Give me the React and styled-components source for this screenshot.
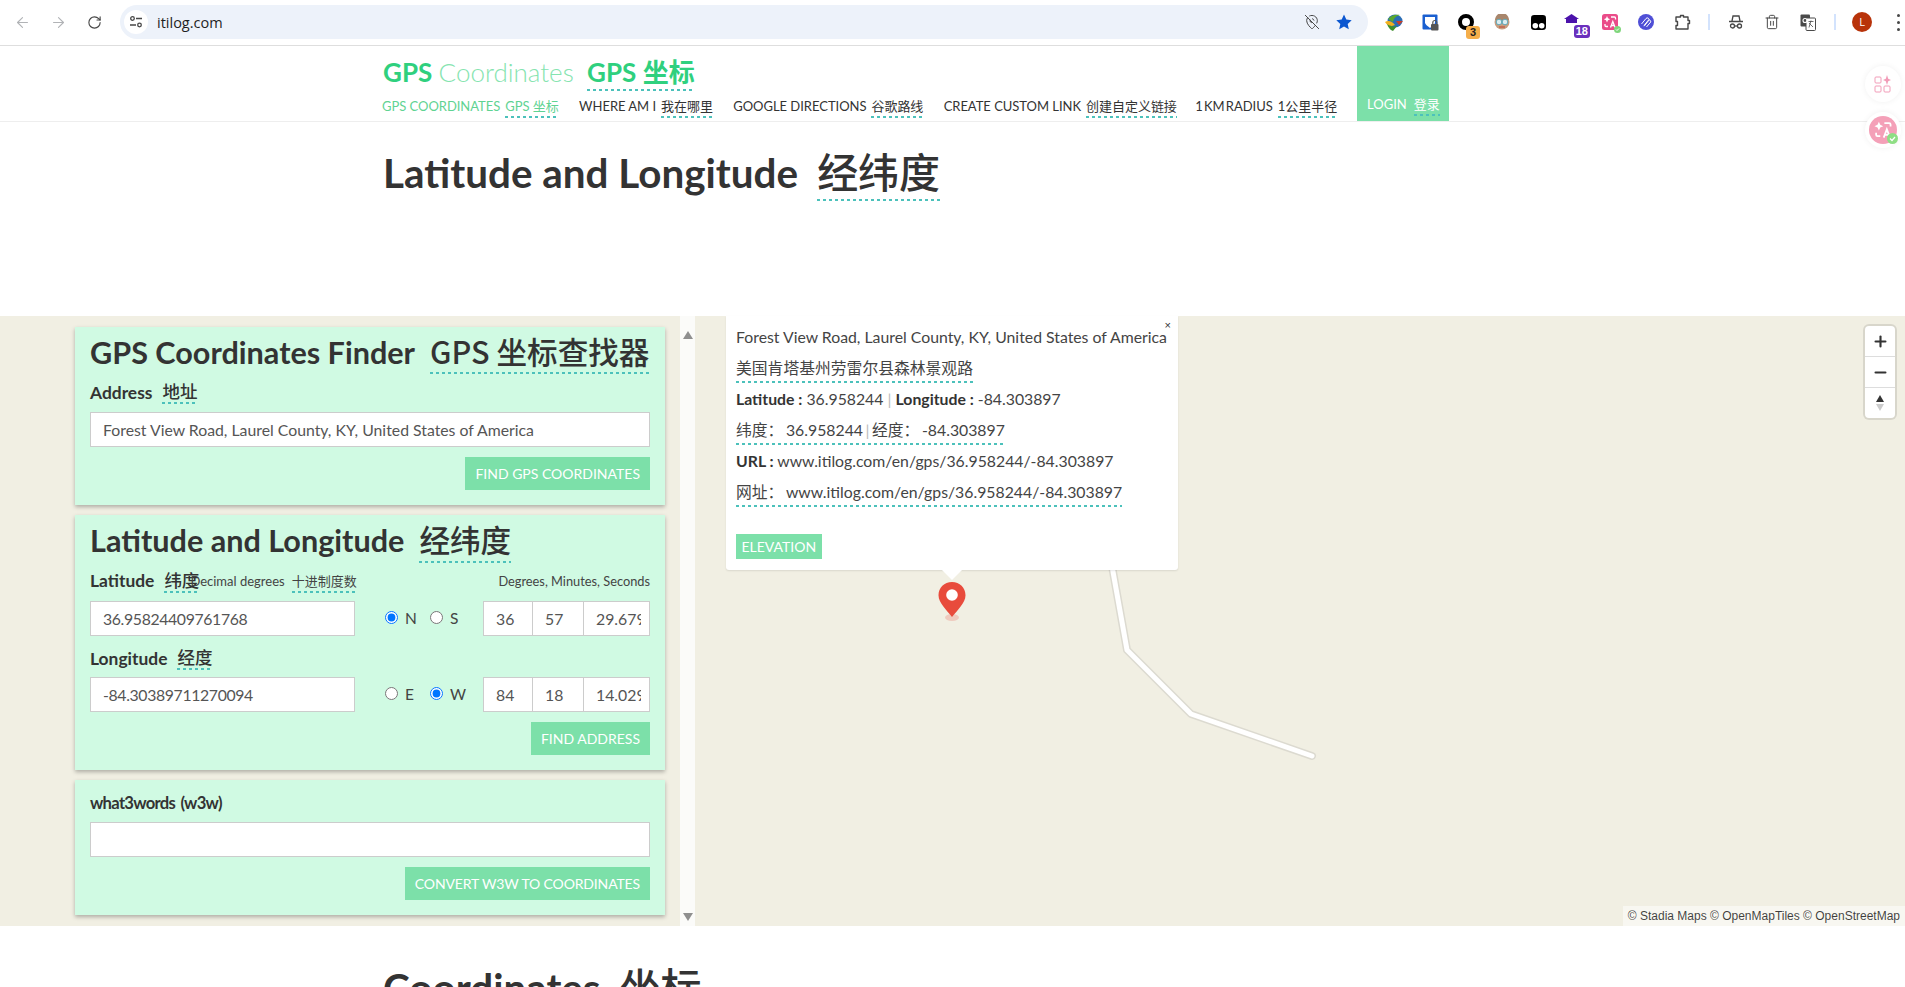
import React from 'react';
import styled, { createGlobalStyle } from 'styled-components';
import { ArrowLeft, ArrowRight, RotateCw, MapPinOff, Plus, Minus, Trash2 } from 'lucide-react';

const FONT = `Lato, "Noto Sans CJK SC", sans-serif`;
const GREEN = '#7ce0a9';

const GlobalStyle = createGlobalStyle`
  html, body {
    margin: 0;
    padding: 0;
    background: #fff;
    overflow: hidden;
  }
  * { box-sizing: border-box; }
`;

const Page = styled.div`
  position: relative;
  width: 1905px;
  height: 987px;
  overflow: hidden;
  font-family: ${FONT};
  color: #333;
`;

/* browser chrome */
const Toolbar = styled.div`
  display: flex;
  align-items: center;
  height: 46px;
  padding: 0 0 1px 4px;
  border-bottom: 1px solid #dedede;
  background: #fff;
`;
const Slot = styled.div`
  position: relative;
  flex: none;
  width: 36px;
  height: 36px;
  display: flex;
  align-items: center;
  justify-content: center;
  color: ${(p) => p.$color || '#474747'};
`;
const UrlPill = styled.div`
  flex: 1;
  height: 34px;
  margin: 0 8px;
  padding: 0 16px 0 4px;
  display: flex;
  align-items: center;
  border-radius: 17px;
  background: #edf2fa;
`;
const TuneBadge = styled.div`
  width: 24px;
  height: 24px;
  border-radius: 50%;
  background: #fff;
  display: flex;
  align-items: center;
  justify-content: center;
`;
const UrlText = styled.span`
  margin-left: 9px;
  flex: 1;
  font: 14.5px "Open Sans", sans-serif;
  color: #1f1f1f;
`;
const PillIcons = styled.div`
  display: flex;
  align-items: center;
  gap: 16px;
`;
const Divider = styled.div`
  flex: none;
  width: 18px;
  display: flex;
  justify-content: center;
  &::before {
    content: '';
    width: 2px;
    height: 16px;
    background: #d3e3fd;
  }
`;
const Count = styled.span`
  position: absolute;
  right: ${(p) => p.$right}px;
  bottom: ${(p) => p.$bottom}px;
  min-width: 14px;
  height: 13px;
  padding: 0 2px;
  border-radius: 3px;
  background: ${(p) => p.$bg};
  color: ${(p) => p.$fg};
  font: 700 11px/13px "Liberation Sans", sans-serif;
  text-align: center;
`;
const Avatar = styled.div`
  width: 20px;
  height: 20px;
  border-radius: 50%;
  background: #b8330a;
  color: #fff;
  font: 11px/20px "Open Sans", sans-serif;
  text-align: center;
`;
const MenuDots = styled.div`
  flex: none;
  width: 14px;
  margin-left: 11px;
  display: flex;
  flex-direction: column;
  align-items: center;
  gap: 4px;
  & i {
    width: 3px;
    height: 3px;
    border-radius: 50%;
    background: #474747;
  }
`;
const GlyphLayer = styled.div`
  position: absolute;
  display: flex;
`;
const CheckDot = styled.svg`
  position: absolute;
  left: ${(p) => p.$x}px;
  top: ${(p) => p.$y}px;
`;

/* site header */
const Header = styled.header`
  display: flex;
  height: 76px;
  padding-left: 382px;
  border-bottom: 1px solid #eee;
`;
const HeaderMain = styled.div`
  width: 975px;
`;
const Brand = styled.div`
  height: 49px;
  padding: 11px 0 0 1px;
  font-size: 26px;
  line-height: 29px;
  color: #2fd07e;
  font-weight: 700;
  white-space: nowrap;
`;
const BrandLight = styled.span`
  font-weight: 300;
  color: #86e4b0;
`;
const NavRow = styled.nav`
  display: flex;
  gap: 20.3px;
  font-size: 13px;
  letter-spacing: -0.03px;
  line-height: 22px;
  font-weight: 400;
  white-space: nowrap;
`;
const NavItem = styled.a`
  color: ${(p) => (p.$active ? '#5fd392' : '#333')};
  &:last-child {
    margin-left: -2px;
    word-spacing: -2px;
  }
`;
const Login = styled.a`
  flex: none;
  width: 92px;
  padding: 0 0 0 10px;
  background: ${GREEN};
  color: #fff;
  display: flex;
  align-items: flex-end;
  font-size: 13px;
  line-height: 22px;
  white-space: nowrap;
`;
const LoginText = styled.span`
  display: block;
  margin-bottom: 5px;
`;
const Zh = styled.span`
  display: inline-block;
  margin-left: ${(p) => p.$gap || '0.55em'};
  padding-bottom: ${(p) => (p.$pad || 1) + 2}px;
  background: repeating-linear-gradient(90deg, #4cc1bb 0 3px, transparent 3px 6px) left bottom / 100% 2px no-repeat;
  line-height: ${(p) => p.$lh || 1.2};
`;

const TitleBlock = styled.section`
  height: ${(p) => p.$h}px;
  padding: ${(p) => p.$top}px 0 0 383px;
`;
const PageTitle = styled.h1`
  margin: 0;
  font-size: 40.4px;
  line-height: 46px;
  font-weight: 700;
  color: #333;
  white-space: nowrap;
`;
const PageZh = styled(Zh)`
  margin-left: 19px;
  padding-bottom: 6px;
  font-family: "Noto Sans CJK SC", sans-serif;
  font-weight: 500;
  font-size: 41px;
`;

/* map band */
const MapBand = styled.section`
  position: relative;
  height: 610px;
  background: #f1efe3;
  display: flex;
`;
const RoadLayer = styled.svg`
  position: absolute;
  inset: 0;
  width: 100%;
  height: 100%;
`;
const Sidebar = styled.aside`
  position: relative;
  flex: none;
  width: 680px;
  padding: 11px 15px 0 75px;
  display: flex;
  flex-direction: column;
  gap: 10px;
`;
const ScrollRail = styled.div`
  position: relative;
  flex: none;
  width: 15px;
  background: #fbfbf9;
  display: flex;
  flex-direction: column;
  justify-content: space-between;
  align-items: center;
  padding: 15px 0 5px;
`;
const Arrow = styled.i`
  width: 0;
  height: 0;
  border-left: 5px solid transparent;
  border-right: 5px solid transparent;
  ${(p) => (p.$up ? 'border-bottom: 8px solid #8f8f8f;' : 'border-top: 8px solid #8f8f8f;')}
`;
const Card = styled.div`
  padding: 0 15px 15px;
  background: #d0fae3;
  box-shadow: 0 2px 4px rgba(0, 0, 0, 0.28);
`;
const CardTitle = styled.h2`
  height: 52px;
  margin: 0;
  padding-top: 6px;
  font-size: 30.6px;
  line-height: 40px;
  font-weight: 700;
  color: #333;
  white-space: nowrap;
`;
const CardZh = styled(Zh)`
  margin-left: 15px;
  font-family: "Noto Sans CJK SC", sans-serif;
  font-weight: 500;
  font-size: 30.6px;
`;
const FieldLabel = styled.div`
  display: flex;
  align-items: flex-start;
  grid-column: ${(p) => p.$col || 'auto'};
  height: ${(p) => p.$h}px;
  padding-top: ${(p) => p.$top || 0}px;
  font-size: 17.4px;
  line-height: 26px;
  font-weight: 700;
  white-space: nowrap;
`;
const LabelZh = styled(Zh)`
  margin-left: 10px;
  font-family: "Noto Sans CJK SC", sans-serif;
  font-weight: 500;
  font-size: 17.5px;
`;
const W3wLabel = styled(FieldLabel)`
  font-size: 16.6px;
  letter-spacing: -0.7px;
  word-spacing: 2px;
`;
const TextField = styled.input`
  display: block;
  width: ${(p) => p.$w || '100%'};
  height: 35px;
  margin-left: ${(p) => p.$overlap || 0}px;
  padding: 0 ${(p) => p.$endPad || 12}px 0 12px;
  border: 1px solid #ccc;
  border-radius: 0;
  outline: none;
  background: #fff;
  color: #555;
  font: 15.8px ${FONT};
  letter-spacing: ${(p) => (p.$tight ? '-0.35px' : '0')};
`;
const Actions = styled.div`
  display: flex;
  justify-content: flex-end;
  margin-top: 10px;
`;
const Button = styled.button`
  height: ${(p) => p.$h || 33}px;
  padding: 0 ${(p) => p.$pad || 10}px;
  border: 0;
  background: ${GREEN};
  color: #fff;
  font: 14px ${FONT};
  letter-spacing: ${(p) => p.$track || 0}px;
  white-space: nowrap;
`;
const CoordGrid = styled.div`
  display: grid;
  grid-template-columns: 265px 128px 167px;
`;
const SmallNote = styled.div`
  padding-top: 3px;
  font-size: 13px;
  font-weight: 400;
  line-height: 20px;
  color: #444;
  white-space: nowrap;
`;
const LatHead = styled(FieldLabel)`
  justify-content: space-between;
  & ${SmallNote} { margin-left: -9px; padding-top: 3px; }
`;
const DmsHead = styled(SmallNote)`
  grid-column: 2 / 4;
  text-align: right;
  padding-top: 4px;
  font-size: 12.8px;
`;
const Radios = styled.div`
  display: flex;
  align-items: center;
  padding: 0 0 2px 30px;
  font-size: 15.5px;
  color: #444;
`;
const RadioLabel = styled.label`
  display: flex;
  align-items: center;
  width: 45px;
  gap: 7px;
  & input { margin: 0; width: 13px; height: 13px; }
`;
const Dms = styled.div`
  display: flex;
`;

/* popup */
const Popup = styled.div`
  position: absolute;
  left: 726px;
  top: 0;
  width: 452px;
  height: 254px;
  padding: 5px 10px 0;
  background: #fff;
  border-radius: 0 0 3px 3px;
  box-shadow: 0 1px 2px rgba(0, 0, 0, 0.1);
  font-size: 15.8px;
  color: #444;
  &::after {
    content: '';
    position: absolute;
    left: 216px;
    top: 100%;
    border-left: 10px solid transparent;
    border-right: 10px solid transparent;
    border-top: 10px solid #fff;
  }
`;
const PopupClose = styled.span`
  position: absolute;
  right: 7px;
  top: 3px;
  font: 11px "Liberation Sans", sans-serif;
  color: #333;
`;
const PopupLine = styled.div`
  height: 31px;
  line-height: 31px;
  white-space: nowrap;
  & b { color: #333; }
  & i { font-style: normal; color: #bbb; }
`;
const PopupZh = styled(Zh)`
  margin-left: 0;
  line-height: 24px;
  word-spacing: -1.5px;
`;
const ElevationRow = styled.div`
  margin-top: 27px;
  line-height: 0;
`;
const Marker = styled.svg`
  position: absolute;
  left: 938px;
  top: 266px;
`;

/* map controls */
const MapControls = styled.div`
  position: absolute;
  right: 10px;
  top: 10px;
  width: 30px;
  background: #fff;
  border-radius: 4px;
  box-shadow: 0 0 0 2px rgba(0, 0, 0, 0.1);
`;
const MapBtn = styled.div`
  height: 30px;
  display: flex;
  align-items: center;
  justify-content: center;
  color: #333;
  & + & { border-top: 1px solid #ddd; height: 31px; }
`;
const Attribution = styled.div`
  position: absolute;
  right: 0;
  bottom: 0;
  padding: 0 5px;
  background: rgba(255, 255, 255, 0.5);
  font: 12px/20px "Liberation Sans", sans-serif;
  color: rgba(0, 0, 0, 0.75);
`;

/* floating page widgets */
const FloatCircle = styled.div`
  position: absolute;
  left: 1865px;
  top: ${(p) => p.$top}px;
  width: 36px;
  height: 36px;
  border-radius: 50%;
  background: #fff;
  box-shadow: 0 0 6px rgba(0, 0, 0, 0.06);
  display: flex;
  align-items: center;
  justify-content: center;
`;

const TuneIcon = () => (
  <svg width="14" height="14" viewBox="0 0 14 14" fill="none" stroke="#474747" strokeWidth="1.3">
    <circle cx="3.5" cy="3.5" r="1.8" />
    <path d="M7 3.5h6M1 10h6" />
    <circle cx="10.5" cy="10" r="1.8" />
  </svg>
);

const StarIcon = () => (
  <svg width="16" height="16" viewBox="0 0 16 16">
    <path fill="#0b57d0" d="M8 .6l2.3 5 5.4.6-4 3.7 1.1 5.4L8 12.6l-4.8 2.7 1.1-5.4-4-3.7 5.4-.6z" />
  </svg>
);

const IdmIcon = () => (
  <svg width="18" height="18" viewBox="0 0 18 18">
    <ellipse cx="10" cy="8" rx="7.500" ry="6.500" fill="#2a6db5" />
    <path fill="#5aa82e" d="M3 6c3-4 8-5 12-4-4 1-6 3-7 7z" />
    <path fill="#f2b01e" d="M0 9c3-2 7-1 10 3l-3 1C4 13 2 12 0 9z" />
    <path fill="#3f8f2c" d="M2 11c3 2 6 3 10 2l-4 5c-3-1-5-4-6-7z" />
    <path fill="#c9402a" d="M11 8l7 0-4 4z" />
  </svg>
);

const LockShieldIcon = () => (
  <svg width="17" height="17" viewBox="0 0 17 17">
    <rect x="0.500" y="0.500" width="15" height="15" rx="1" fill="#1a5fd0" />
    <path fill="#fff" d="M3 3h10v6c-1 2-3 3.500-5 5-2-1.500-4-3-5-5z" />
    <rect x="9" y="10" width="7.500" height="6.500" rx="1" fill="#555" />
    <path d="M10.800 10V8.500a2 2 0 014 0V10" fill="none" stroke="#555" strokeWidth="1.2" />
  </svg>
);

const RingIcon = () => (
  <svg width="16" height="16" viewBox="0 0 16 16">
    <circle cx="8" cy="8" r="6" fill="none" stroke="#000" strokeWidth="4" />
  </svg>
);

const FaceIcon = () => (
  <svg width="16" height="16" viewBox="0 0 16 16">
    <circle cx="8" cy="8" r="7.500" fill="#c79e80" />
    <path d="M1 6a7 7 0 0114 0z" fill="#a8866c" />
    <circle cx="5" cy="8" r="2.800" fill="#dcecef" stroke="#5fa8b8" />
    <circle cx="11" cy="8" r="2.800" fill="#dcecef" stroke="#5fa8b8" />
    <path d="M5 13h6" stroke="#c2614a" strokeWidth="1.500" />
  </svg>
);

const DotsBoxIcon = () => (
  <svg width="15" height="15" viewBox="0 0 14 14">
    <rect width="14" height="14" rx="3" fill="#000" />
    <circle cx="4" cy="10" r="2.600" fill="#fff" />
    <circle cx="10" cy="10" r="2.600" fill="#fff" />
  </svg>
);

const HouseIcon = () => (
  <CheckDot width="15" height="9" viewBox="0 0 15 9" $x={8} $y={10}>
    <path fill="#4b12ab" d="M7.500 0l7.500 5H0z" />
    <rect x="2" y="5" width="11" height="4" fill="#4b12ab" />
  </CheckDot>
);

const TranslateGlyph = ({ size, color }) => (
  <svg width={size} height={size} viewBox="0 0 16 16" fill="none" stroke={color} strokeWidth="1.3">
    <path fill={color} stroke="none" d="M5 2l1 2.200 2.200 1-2.200 1L5 8.400l-1-2.200-2.200-1 2.200-1z" />
    <path d="M9 3h3.500a1 1 0 011 1v1.500M3 10v1.500a1 1 0 001 1h2" />
    <path d="M8.500 13.500l2.300-6 2.300 6M9.300 11.500h3" />
  </svg>
);

const PinkTranslateIcon = () => (
  <Slot>
    <svg width="16" height="16" viewBox="0 0 16 16">
      <rect width="16" height="16" rx="2.500" fill="#ea4c89" />
    </svg>
    <GlyphLayer><TranslateGlyph size={16} color="#fff" /></GlyphLayer>
    <CheckDot width="7" height="7" viewBox="0 0 7 7" $x={22} $y={22}>
      <circle cx="3.500" cy="3.500" r="3.500" fill="#7fd67b" />
      <path d="M2 3.500l1 1 2-2" stroke="#fff" fill="none" />
    </CheckDot>
  </Slot>
);

const LoopsIcon = () => (
  <svg width="16" height="16" viewBox="0 0 16 16">
    <circle cx="8" cy="8" r="8" fill="#4f4fd6" />
    <path d="M3.500 10l4.500-5.500a1.700 1.700 0 012.600 2.200l-4.500 5.500M6 11.500l4.500-5.500a1.700 1.700 0 012.200 2L8.500 13" stroke="#fff" fill="none" strokeWidth="1" />
  </svg>
);

const PuzzleIcon = () => (
  <svg width="17" height="17" viewBox="0 0 17 17" fill="none" stroke="#474747" strokeWidth="1.400" strokeLinejoin="round">
    <path d="M2 3h4.500V1.500h3V3H14v3.500h1.500v3H14V15H2v-3.500h1.500v-4H2z" />
  </svg>
);

const IncognitoIcon = () => (
  <svg width="16" height="16" viewBox="0 0 16 16" fill="none" stroke="#474747" strokeWidth="1.300">
    <path d="M4 7l1-5h6l1 5M1 7.500h14" />
    <circle cx="4.500" cy="12" r="2" />
    <circle cx="11.500" cy="12" r="2" />
    <path d="M6.500 12h3" />
  </svg>
);

const TranslateIcon = () => (
  <svg width="16" height="17" viewBox="0 0 16 17">
    <rect x="0.500" y="0.500" width="9.500" height="12" rx="1" fill="#4a4a4a" />
    <rect x="6" y="4" width="9.500" height="12.500" rx="1" fill="#fff" stroke="#4a4a4a" />
    <circle cx="5" cy="6.500" r="2" fill="none" stroke="#fff" strokeWidth="1.100" />
    <path d="M8.500 7.500h5M11 6.500l-2 7M9 9l4 4" stroke="#4a4a4a" fill="none" strokeWidth="0.800" />
  </svg>
);

const CompassIcon = () => (
  <svg width="10" height="18" viewBox="0 0 10 18">
    <path d="M5 1l4 7H1z" fill="#333" />
    <path d="M5 17l4-7H1z" fill="#ccc" />
  </svg>
);

const GridSparkIcon = () => (
  <svg width="18" height="18" viewBox="0 0 18 18" fill="none" stroke="#f29cb8" strokeWidth="1">
    <rect x="1" y="2" width="6" height="6" rx="1" />
    <rect x="1" y="11" width="6" height="6" rx="1" />
    <rect x="10" y="11" width="6" height="6" rx="1" />
    <path fill="#f29cb8" stroke="none" d="M13 0l1.200 3.800L17 5l-2.800 1.200L13 10l-1.200-3.800L9 5l2.800-1.200z" />
  </svg>
);

const PinkCircleIcon = () => (
  <FloatCircle $top={112}>
    <svg width="28" height="28" viewBox="0 0 28 28">
      <circle cx="14" cy="14" r="14" fill="#f4a0b8" />
    </svg>
    <GlyphLayer><TranslateGlyph size={22} color="#fff" /></GlyphLayer>
    <CheckDot width="11" height="11" viewBox="0 0 11 11" $x={22} $y={21}>
      <circle cx="5.500" cy="5.500" r="5.500" fill="#8ede84" />
      <path d="M3 5.500l2 2 3-3.500" stroke="#fff" fill="none" strokeWidth="1.200" />
    </CheckDot>
  </FloatCircle>
);

const navItems = [
  ['GPS COORDINATES', 'GPS 坐标', true],
  ['WHERE AM I', '我在哪里'],
  ['GOOGLE DIRECTIONS', '谷歌路线'],
  ['CREATE CUSTOM LINK', '创建自定义链接'],
  ['1 KM RADIUS', '1公里半径'],
];

export default function App() {
  return (
    <Page>
      <GlobalStyle />
      <Toolbar>
        <Slot $color="#b1b3b6"><ArrowLeft size={17} strokeWidth={1.6} /></Slot>
        <Slot $color="#b1b3b6"><ArrowRight size={17} strokeWidth={1.6} /></Slot>
        <Slot><RotateCw size={15} strokeWidth={1.8} /></Slot>
        <UrlPill>
          <TuneBadge><TuneIcon /></TuneBadge>
          <UrlText>itilog.com</UrlText>
          <PillIcons>
            <MapPinOff size={16} strokeWidth={1.5} color="#474747" />
            <StarIcon />
          </PillIcons>
        </UrlPill>
        <Slot><IdmIcon /></Slot>
        <Slot><LockShieldIcon /></Slot>
        <Slot><RingIcon /><Count $right={4} $bottom={1} $bg="#f5ae4a" $fg="#222">3</Count></Slot>
        <Slot><FaceIcon /></Slot>
        <Slot><DotsBoxIcon /></Slot>
        <Slot><HouseIcon /><Count $right={2} $bottom={2} $bg="#6a30bd" $fg="#fff">18</Count></Slot>
        <PinkTranslateIcon />
        <Slot><LoopsIcon /></Slot>
        <Slot><PuzzleIcon /></Slot>
        <Divider />
        <Slot><IncognitoIcon /></Slot>
        <Slot><Trash2 size={16} strokeWidth={1.5} /></Slot>
        <Slot><TranslateIcon /></Slot>
        <Divider />
        <Slot><Avatar>L</Avatar></Slot>
        <MenuDots><i /><i /><i /></MenuDots>
      </Toolbar>

      <Header>
        <HeaderMain>
          <Brand>
            GPS <BrandLight>Coordinates</BrandLight> <Zh $pad={1} $gap="0.27em">GPS 坐标</Zh>
          </Brand>
          <NavRow>
            {navItems.map(([en, zh, active]) => (
              <NavItem key={en} $active={active}>
                {en}<Zh $gap="5px" $lh={1.4} $pad={0.5}>{zh}</Zh>
              </NavItem>
            ))}
          </NavRow>
        </HeaderMain>
        <Login>
          <LoginText>LOGIN<Zh $gap="7px" $lh={1.4} $pad={0.5}>登录</Zh></LoginText>
        </Login>
      </Header>

      <TitleBlock $h={194} $top={24}>
        <PageTitle>Latitude and Longitude<PageZh>经纬度</PageZh></PageTitle>
      </TitleBlock>

      <MapBand>
        <RoadLayer viewBox="0 0 1905 610">
          <polyline points="1112,250 1127,334 1191,398 1312,440" fill="none" stroke="#dcdad0" strokeWidth="8" strokeLinecap="round" strokeLinejoin="round" />
          <polyline points="1112,250 1127,334 1191,398 1312,440" fill="none" stroke="#fff" strokeWidth="5" strokeLinecap="round" strokeLinejoin="round" />
        </RoadLayer>

        <Sidebar>
          <Card>
            <CardTitle>GPS Coordinates Finder<CardZh $pad={2}>GPS 坐标查找器</CardZh></CardTitle>
            <FieldLabel $h={33} $top={1}>Address<LabelZh>地址</LabelZh></FieldLabel>
            <TextField readOnly value="Forest View Road, Laurel County, KY, United States of America" />
            <Actions><Button>FIND GPS COORDINATES</Button></Actions>
          </Card>

          <Card>
            <CardTitle>Latitude and Longitude<CardZh $pad={3}>经纬度</CardZh></CardTitle>
            <CoordGrid>
              <LatHead $h={34} $top={1}>
                <div>Latitude<LabelZh>纬度</LabelZh></div>
                <SmallNote>Decimal degrees<Zh $gap="7px">十进制度数</Zh></SmallNote>
              </LatHead>
              <DmsHead>Degrees, Minutes, Seconds</DmsHead>

              <TextField readOnly $tight value="36.95824409761768" />
              <Radios>
                <RadioLabel><input type="radio" name="ns" defaultChecked />N</RadioLabel>
                <RadioLabel><input type="radio" name="ns" />S</RadioLabel>
              </Radios>
              <Dms>
                <TextField readOnly value="36" $w="50px" />
                <TextField readOnly value="57" $w="52px" $overlap={-1} />
                <TextField readOnly value="29.67987" $w="67px" $overlap={-1} $endPad={8} />
              </Dms>

              <FieldLabel $h={41} $top={10} $col="1 / 4">Longitude<LabelZh>经度</LabelZh></FieldLabel>

              <TextField readOnly $tight value="-84.30389711270094" />
              <Radios>
                <RadioLabel><input type="radio" name="ew" />E</RadioLabel>
                <RadioLabel><input type="radio" name="ew" defaultChecked />W</RadioLabel>
              </Radios>
              <Dms>
                <TextField readOnly value="84" $w="50px" />
                <TextField readOnly value="18" $w="52px" $overlap={-1} />
                <TextField readOnly value="14.02960" $w="67px" $overlap={-1} $endPad={8} />
              </Dms>
            </CoordGrid>
            <Actions><Button>FIND ADDRESS</Button></Actions>
          </Card>

          <Card>
            <W3wLabel $h={42} $top={10}>what3words (w3w)</W3wLabel>
            <TextField readOnly value="" />
            <Actions><Button $track={-0.15}>CONVERT W3W TO COORDINATES</Button></Actions>
          </Card>
        </Sidebar>
        <ScrollRail><Arrow $up /><Arrow /></ScrollRail>

        <Popup>
          <PopupClose>×</PopupClose>
          <PopupLine>Forest View Road, Laurel County, KY, United States of America</PopupLine>
          <PopupLine><PopupZh>美国肯塔基州劳雷尔县森林景观路</PopupZh></PopupLine>
          <PopupLine><b>Latitude :</b> 36.958244 <i>|</i> <b>Longitude :</b> -84.303897</PopupLine>
          <PopupLine><PopupZh>纬度： 36.958244 <i>|</i> 经度： -84.303897</PopupZh></PopupLine>
          <PopupLine><b>URL :</b> www.itilog.com/en/gps/36.958244/-84.303897</PopupLine>
          <PopupLine><PopupZh>网址： www.itilog.com/en/gps/36.958244/-84.303897</PopupZh></PopupLine>
          <ElevationRow><Button $h={25} $pad={5.5}>ELEVATION</Button></ElevationRow>
        </Popup>
        <Marker width="28" height="40" viewBox="0 0 28 40">
          <ellipse cx="14" cy="35.500" rx="7" ry="3.500" fill="#e84b3c" opacity="0.22" />
          <path fill="#e84b3c" d="M14 0C6.300 0 .5 5.800.5 13.300.5 21 9 28.500 14 35c5-6.500 13.500-14 13.500-21.700C27.500 5.800 21.700 0 14 0z" />
          <circle cx="14" cy="13" r="5.800" fill="#fff" />
        </Marker>

        <MapControls>
          <MapBtn><Plus size={17} strokeWidth={3} /></MapBtn>
          <MapBtn><Minus size={17} strokeWidth={3} /></MapBtn>
          <MapBtn><CompassIcon /></MapBtn>
        </MapControls>
        <Attribution>© Stadia Maps © OpenMapTiles © OpenStreetMap</Attribution>
      </MapBand>

      <TitleBlock $h={61} $top={35}>
        <PageTitle>Coordinates<PageZh>坐标</PageZh></PageTitle>
      </TitleBlock>

      <FloatCircle $top={66}><GridSparkIcon /></FloatCircle>
      <PinkCircleIcon />
    </Page>
  );
}
